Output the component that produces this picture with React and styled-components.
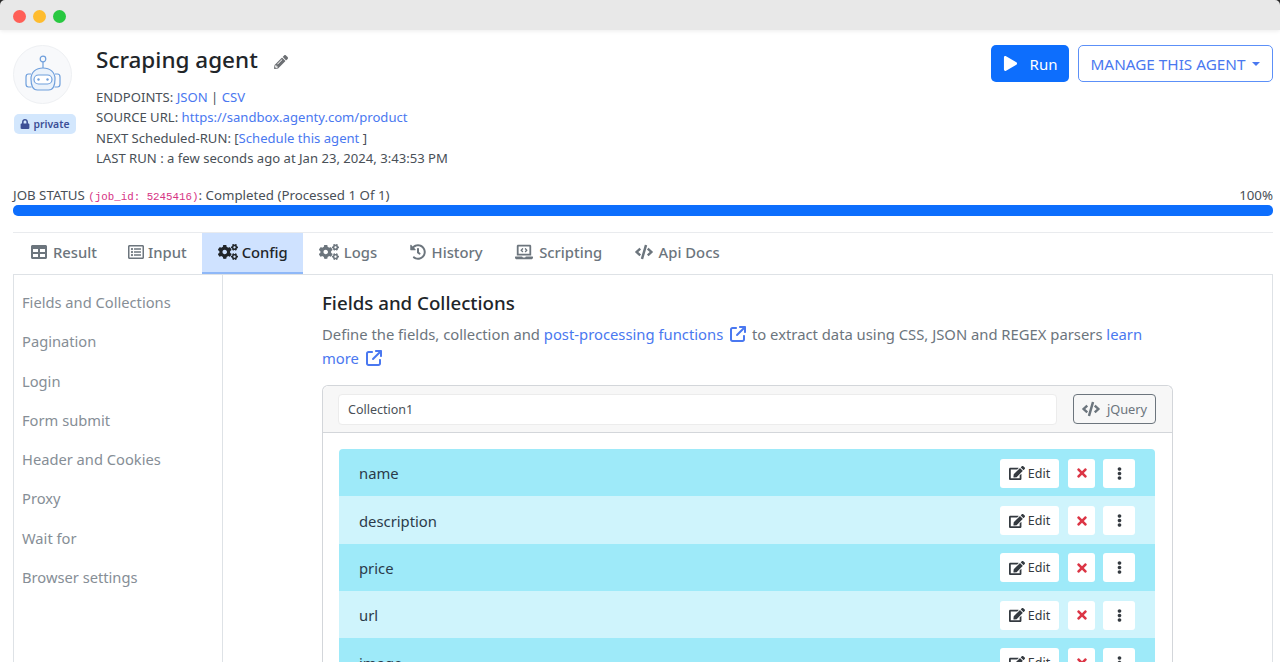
import styled, { createGlobalStyle } from "styled-components";
import {
  FaTable,
  FaRegListAlt,
  FaCogs,
  FaHistory,
  FaLaptopCode,
  FaCode,
  FaEdit,
  FaTimes,
  FaEllipsisV,
  FaPencilAlt,
  FaLock,
  FaPlay,
} from "react-icons/fa";
import { FaArrowUpRightFromSquare } from "react-icons/fa6";

const GlobalStyle = createGlobalStyle`
  html, body {
    margin: 0;
    height: 662px;
    overflow: hidden;
    background: #2a2a2a;
  }
  body {
    font-family: "Noto Sans", "Open Sans", sans-serif;
    color: #495057;
  }
  a {
    color: #4a78f0;
    text-decoration: none;
  }
`;

const TitleBar = styled.div`
  position: relative;
  height: 27px;
  padding: 3px 0 0 13px;
  background: #e8e8e8;
  border-radius: 5px 5px 0 0;
  box-shadow: 0 1px 4px rgba(0, 0, 0, 0.08);
  display: flex;
  align-items: center;
  gap: 7px;
`;

const Dot = styled.span`
  width: 13px;
  height: 13px;
  border-radius: 50%;
  background: ${(p) => p.color};
`;

const Page = styled.div`
  padding: 15px 7px 0 13px;
  background: #fff;
`;

const Header = styled.div`
  display: flex;
  height: 141px;
`;

const AvatarColumn = styled.div`
  width: 83px;
  flex-shrink: 0;
`;

const Avatar = styled.div`
  width: 57px;
  height: 57px;
  border-radius: 50%;
  background: #f8f9fb;
  border: 1px solid #eef0f3;
  display: flex;
  align-items: center;
  justify-content: center;
`;

const PrivateBadge = styled.div`
  margin: 10px 0 0 1px;
  width: 62px;
  height: 20px;
  border-radius: 5px;
  background: #d3e7fd;
  color: #3c4f96;
  font-size: 10.4px;
  font-weight: 600;
  display: flex;
  align-items: center;
  justify-content: center;
  gap: 3px;
`;

const Info = styled.div`
  flex: 1;
`;

const Title = styled.h1`
  margin: 0 0 11.5px;
  font-size: 22.5px;
  line-height: 30px;
  font-weight: 500;
  color: #212529;
  display: flex;
  align-items: center;
  gap: 16px;
`;

const PencilIcon = styled(FaPencilAlt)`
  color: #6c6f73;
  font-size: 14px;
  margin-top: 4px;
`;

const InfoLine = styled.div`
  font-size: 13.1px;
  line-height: 20.6px;
`;

const Actions = styled.div`
  display: flex;
  gap: 9px;
  align-items: flex-start;
`;

const RunButton = styled.button`
  width: 78px;
  height: 37px;
  border: none;
  border-radius: 5px;
  background: #0d6efd;
  color: #fff;
  font: inherit;
  font-size: 15px;
  display: flex;
  align-items: center;
  justify-content: center;
  gap: 12px;
`;

const ManageButton = styled.button`
  width: 195px;
  height: 37px;
  padding: 0 1px 0 0;
  border: 1px solid #5c90f8;
  border-radius: 5px;
  background: #fff;
  color: #4a78f0;
  font: inherit;
  font-size: 15.3px;
  display: flex;
  align-items: center;
  justify-content: center;
  gap: 6px;
`;

const Caret = styled.span`
  border-top: 4px solid #4a78f0;
  border-left: 4px solid transparent;
  border-right: 4px solid transparent;
`;

const StatusRow = styled.div`
  display: flex;
  justify-content: space-between;
  height: 19px;
  font-size: 13.3px;
  line-height: 19px;
`;

const JobId = styled.code`
  font-family: "Liberation Mono", monospace;
  font-size: 10.8px;
  color: #d63384;
`;

const Progress = styled.div`
  height: 11px;
  border-radius: 5px;
  background: #0d6efd;
  margin-bottom: 16px;
`;

const Tabs = styled.div`
  display: flex;
  height: 41px;
  padding-left: 2.5px;
  border-top: 1px solid #e9ebee;
  border-bottom: 1px solid #dee2e6;
`;

const Tab = styled.div`
  display: flex;
  align-items: center;
  gap: ${(p) => p.$gap}px;
  padding: 0 15.5px 3px ${(p) => p.$pad || 15.5}px;
  font-size: 14.8px;
  font-weight: 500;
  color: ${(p) => (p.$active ? "#212529" : "#6c757d")};
  background: ${(p) => (p.$active ? "#cfe2ff" : "transparent")};
  box-shadow: ${(p) => (p.$active ? "inset 0 -2px 0 #8fb8f8" : "none")};
`;

const Body = styled.div`
  display: flex;
  border-left: 1px solid #dee2e6;
  border-right: 1px solid #dee2e6;
  height: 400px;
`;

const Sidebar = styled.div`
  width: 200px;
  flex-shrink: 0;
  border-right: 1px solid #dee2e6;
  padding: 8px 0 0 8px;
`;

const SideItem = styled.div`
  height: 39.3px;
  line-height: 39.3px;
  font-size: 14.7px;
  color: #868e96;
`;

const Main = styled.div`
  padding: 13px 0 0 99px;
  width: 851px;
`;

const SectionTitle = styled.h2`
  margin: 0 0 4px;
  font-size: 18.7px;
  line-height: 30px;
  font-weight: 500;
  color: #212529;
`;

const Description = styled.p`
  margin: 0 0 15px;
  font-size: 14.8px;
  line-height: 24px;
  color: #6c757d;
`;

const ExternalIcon = styled(FaArrowUpRightFromSquare)`
  font-size: 16px;
  margin: 0 2px 0 3px;
  vertical-align: -2px;
`;

const Card = styled.div`
  border: 1px solid #d3d6da;
  border-radius: 6px 6px 0 0;
  border-bottom: none;
`;

const CardHeader = styled.div`
  height: 46px;
  background: #f7f7f7;
  border-bottom: 1px solid #d3d6da;
  border-radius: 6px 6px 0 0;
  display: flex;
  align-items: center;
  gap: 16px;
  padding: 0 16px 0 15px;
`;

const NameInput = styled.div`
  flex: 1;
  height: 29px;
  background: #fff;
  border: 1px solid #ececec;
  border-radius: 4px;
  padding-left: 9px;
  font-size: 12.5px;
  line-height: 29px;
  color: #495057;
`;

const JQueryButton = styled.button`
  width: 83px;
  height: 30px;
  border: 1px solid #6c757d;
  border-radius: 4px;
  background: #f7f7f7;
  color: #6c757d;
  font: inherit;
  font-size: 12.8px;
  display: flex;
  align-items: center;
  justify-content: center;
  gap: 7px;
`;

const FieldList = styled.div`
  padding: 16px 17px 16px 16px;
`;

const FieldRow = styled.div`
  height: 46.35px;
  background: ${(p) => (p.$odd ? "#9eeaf9" : "#cff4fc")};
  border-radius: ${(p) => (p.$first ? "4px 4px 0 0" : "0")};
  display: flex;
  align-items: center;
  gap: 8px;
  padding: 1px 20px 0 20px;
  font-size: 14.8px;
  color: #2b3b4a;
`;

const FieldName = styled.span`
  flex: 1;
`;

const RowButton = styled.button`
  height: 29px;
  width: ${(p) => p.$width}px;
  margin-left: ${(p) => p.$gap || 0}px;
  border: none;
  border-radius: 3px;
  background: #fff;
  color: ${(p) => p.$color || "#343a40"};
  font: inherit;
  font-size: 12.5px;
  padding: 0;
  display: flex;
  align-items: center;
  justify-content: center;
  gap: 3px;
`;

const fields = ["name", "description", "price", "url", "image"];
const sideItems = [
  "Fields and Collections",
  "Pagination",
  "Login",
  "Form submit",
  "Header and Cookies",
  "Proxy",
  "Wait for",
  "Browser settings",
];

function RobotLogo() {
  return (
    <svg width="38" height="40" viewBox="0 0 38 40" fill="none" stroke="#6f9fdc" strokeWidth="1.2">
      <circle cx="19" cy="4" r="2.8" />
      <path d="M19 7v6" />
      <path d="M7 24c0-7 5-11 12-11s12 4 12 11c0 3-.5 6-1.500 8-1 2-3 3-5 3H13.500c-2 0-4-1-5-3-1-2-1.500-5-1.500-8z" fill="#eaf2fb" />
      <path d="M7 19H4.500C3 19 2 20 2 22v7c0 2 1 3 2.500 3H7.500" />
      <path d="M31 19h2.500c1.500 0 2.500 1 2.500 3v7c0 2-1 3-2.500 3H30.500" />
      <rect x="10" y="20" width="18" height="9" rx="4.500" fill="#fff" />
      <circle cx="14.500" cy="24.500" r="1.200" fill="#6f9fdc" stroke="none" />
      <circle cx="23.500" cy="24.500" r="1.200" fill="#6f9fdc" stroke="none" />
    </svg>
  );
}

export default function App() {
  return (
    <>
      <GlobalStyle />
      <TitleBar>
        <Dot color="#ff5f57" />
        <Dot color="#febc2e" />
        <Dot color="#28c840" />
      </TitleBar>
      <Page>
        <Header>
          <AvatarColumn>
            <Avatar>
              <RobotLogo />
            </Avatar>
            <PrivateBadge>
              <FaLock size={10} />
              private
            </PrivateBadge>
          </AvatarColumn>
          <Info>
            <Title>
              Scraping agent
              <PencilIcon />
            </Title>
            <InfoLine>
              ENDPOINTS: <a href="#json">JSON</a> | <a href="#csv">CSV</a>
            </InfoLine>
            <InfoLine>
              SOURCE URL: <a href="#url">https://sandbox.agenty.com/product</a>
            </InfoLine>
            <InfoLine>
              NEXT Scheduled-RUN: [<a href="#schedule">Schedule this agent</a> ]
            </InfoLine>
            <InfoLine>LAST RUN : a few seconds ago at Jan 23, 2024, 3:43:53 PM</InfoLine>
          </Info>
          <Actions>
            <RunButton>
              <FaPlay size={15} />
              Run
            </RunButton>
            <ManageButton>
              MANAGE THIS AGENT
              <Caret />
            </ManageButton>
          </Actions>
        </Header>
        <StatusRow>
          <span>
            JOB STATUS <JobId>(job_id: 5245416)</JobId>: Completed (Processed 1 Of 1)
          </span>
          <span>100%</span>
        </StatusRow>
        <Progress />
        <Tabs>
          <Tab $gap={6}>
            <FaTable size={16} /> Result
          </Tab>
          <Tab $gap={4}>
            <FaRegListAlt size={16} /> Input
          </Tab>
          <Tab $active $gap={4}>
            <FaCogs size={20} /> Config
          </Tab>
          <Tab $gap={5}>
            <FaCogs size={20} /> Logs
          </Tab>
          <Tab $gap={6} $pad={17}>
            <FaHistory size={16} /> History
          </Tab>
          <Tab $gap={6} $pad={17}>
            <FaLaptopCode size={18} /> Scripting
          </Tab>
          <Tab $gap={6} $pad={17}>
            <FaCode size={18} /> Api Docs
          </Tab>
        </Tabs>
        <Body>
          <Sidebar>
            {sideItems.map((item) => (
              <SideItem key={item}>{item}</SideItem>
            ))}
          </Sidebar>
          <Main>
            <SectionTitle>Fields and Collections</SectionTitle>
            <Description>
              Define the fields, collection and <a href="#pp">post-processing functions <ExternalIcon /></a> to extract
              data using CSS, JSON and REGEX parsers <a href="#more">learn<br />more <ExternalIcon /></a>
            </Description>
            <Card>
              <CardHeader>
                <NameInput>Collection1</NameInput>
                <JQueryButton>
                  <FaCode size={18} />
                  jQuery
                </JQueryButton>
              </CardHeader>
              <FieldList>
                {fields.map((field, index) => (
                  <FieldRow key={field} $odd={index % 2 === 0} $first={index === 0}>
                    <FieldName>{field}</FieldName>
                    <RowButton $width={59}>
                      <FaEdit size={16} />
                      Edit
                    </RowButton>
                    <RowButton $width={27} $gap={1} $color="#dc3545">
                      <FaTimes size={14} />
                    </RowButton>
                    <RowButton $width={32} $color="#343a40">
                      <FaEllipsisV size={13} />
                    </RowButton>
                  </FieldRow>
                ))}
              </FieldList>
            </Card>
          </Main>
        </Body>
      </Page>
    </>
  );
}
